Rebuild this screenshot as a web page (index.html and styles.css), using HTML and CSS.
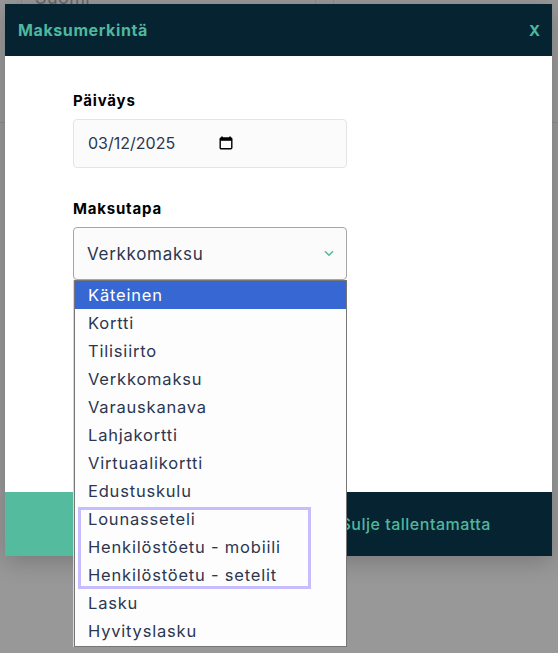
FILE: index.html
```html
<!DOCTYPE html>
<html>
<head>
    <meta charset="UTF-8">
    <meta name="viewport" content="width=device-width, initial-scale=1.0">
    <title>Maksumerkintä</title>
    <link rel="stylesheet" href="styles.css">
</head>
<body>
    <!-- Page behind the modal, only its edges show -->
    <div class="page-behind">
        <span class="behind-text">Suomi</span>
        <i class="behind-rule"></i>
        <i class="behind-tick tick-a"></i>
        <i class="behind-tick tick-b"></i>
        <i class="behind-tick tick-c"></i>
    </div>

    <div class="modal">
        <div class="modal-header">
            <span class="modal-title">Maksumerkintä</span>
            <span class="modal-close">X</span>
        </div>

        <div class="modal-body">
            <label class="field-label">Päiväys</label>
            <div class="date-input">
                <span>03/12/2025</span>
                <svg class="calendar-icon" viewBox="0 0 14 14" width="14" height="14">
                    <path d="M3 .5v2M11 .5v2" stroke="#000" stroke-width="1.6" fill="none"></path>
                    <rect x="1.2" y="2" width="11.6" height="10.8" rx="1" fill="none" stroke="#000" stroke-width="1.4"></rect>
                    <rect x="1.2" y="2" width="11.6" height="2.8" fill="#000"></rect>
                </svg>
            </div>

            <label class="field-label field-label-second">Maksutapa</label>
            <div class="select-box">
                <span>Verkkomaksu</span>
                <svg class="chevron" viewBox="0 0 10 7" width="10" height="7">
                    <path d="M1 1.2 5 5.2 9 1.2" stroke="#55bb9f" stroke-width="1.6" fill="none"></path>
                </svg>
            </div>
        </div>

        <div class="modal-footer">
            <button class="btn-save"></button>
            <button class="btn-close">Sulje tallentamatta</button>
        </div>
    </div>

    <!-- Native select popup, hangs over the modal -->
    <div class="dropdown">
        <ul class="dropdown-list">
            <li class="selected">Käteinen</li>
            <li>Kortti</li>
            <li>Tilisiirto</li>
            <li>Verkkomaksu</li>
            <li>Varauskanava</li>
            <li>Lahjakortti</li>
            <li>Virtuaalikortti</li>
            <li>Edustuskulu</li>
            <li>Lounasseteli</li>
            <li>Henkilöstöetu - mobiili</li>
            <li>Henkilöstöetu - setelit</li>
            <li>Lasku</li>
            <li>Hyvityslasku</li>
        </ul>
        <div class="highlight"></div>
    </div>
</body>
</html>
```

FILE: styles.css
```css
* {
    box-sizing: border-box;
}

html, body {
    height: 100%;
}

body {
    font-family: Inter, "Open Sans", sans-serif;
    background-color: #989898;
    margin: 0;
    padding: 4px 6px 0 5px;
    overflow: hidden;
    position: relative;
}

.page-behind {
    position: absolute;
    top: 0;
    left: 0;
    width: 100%;
    height: 100%;
}

.behind-text {
    position: absolute;
    top: -11px;
    left: 35px;
    font-size: 18px;
    line-height: 18px;
    letter-spacing: 0.4px;
    color: #666;
}

.behind-rule {
    position: absolute;
    top: 122px;
    left: 0;
    width: 100%;
    height: 1px;
    background-color: #8c8c8c;
}

.behind-tick {
    position: absolute;
    top: 0;
    width: 1px;
    height: 4px;
    background-color: #8c8c8c;
}

.tick-a {
    left: 21px;
}

.tick-b {
    left: 315px;
}

.tick-c {
    left: 333px;
}

.modal {
    position: relative;
    display: flex;
    flex-direction: column;
    height: 552px;
    background-color: white;
    box-shadow: 0 6px 22px rgba(0, 0, 0, 0.2);
}

.modal-header {
    height: 52px;
    padding: 0 12px 0 13px;
    display: flex;
    align-items: center;
    justify-content: space-between;
    background-color: #062332;
    color: #4fb89c;
    font-size: 16px;
    font-weight: 700;
    letter-spacing: 0.6px;
}

.modal-close {
    font-size: 15px;
    letter-spacing: 0;
}

.modal-body {
    flex: 1;
    padding: 35px 0 0 68px;
}

.field-label {
    display: block;
    font-size: 15px;
    font-weight: 700;
    line-height: 20px;
    letter-spacing: 0.8px;
    color: #000;
}

.field-label-second {
    margin-top: 31px;
}

.date-input {
    width: 274px;
    height: 49px;
    margin-top: 8px;
    padding: 0 113px 2px 14px;
    display: flex;
    align-items: center;
    justify-content: space-between;
    background-color: #fbfbfb;
    border: 1px solid #e4e4e4;
    border-radius: 4px;
    font-size: 16px;
    color: #2c3650;
}

.select-box {
    width: 274px;
    height: 53px;
    margin-top: 8px;
    padding: 0 12px 0 13px;
    display: flex;
    align-items: center;
    justify-content: space-between;
    background-color: #fbfbfb;
    border: 1px solid #a6a6a6;
    border-radius: 4px;
    font-size: 17px;
    letter-spacing: 0.7px;
    color: #2c3650;
}

.modal-footer {
    height: 64px;
    display: flex;
}

.btn-save {
    flex: 0 0 50%;
    border: none;
    background-color: #55bb9f;
}

.btn-close {
    flex: 0 0 50%;
    border: none;
    padding: 0 0 0 62px;
    background-color: #062332;
    color: #4fb89c;
    font-family: inherit;
    font-size: 16px;
    font-weight: 500;
    letter-spacing: 0.5px;
    text-align: left;
}

.dropdown {
    position: absolute;
    top: 280px;
    left: 74px;
    width: 273px;
    height: 367px;
    background-color: #fdfdfd;
    border: 1px solid #767676;
    box-shadow: -1px 0 0 #d8d8d8;
    font-size: 16.5px;
    letter-spacing: 0.8px;
    color: #2c3650;
}

.dropdown-list {
    margin: 0;
    padding: 0;
    list-style: none;
}

.dropdown-list li {
    height: 28px;
    line-height: 28px;
    padding-left: 13px;
}

.dropdown-list .selected {
    background-color: #3767d2;
    color: white;
}

.highlight {
    position: absolute;
    top: 226px;
    left: 3px;
    width: 233px;
    height: 82px;
    border: 3px solid #c6bdff;
}
```
